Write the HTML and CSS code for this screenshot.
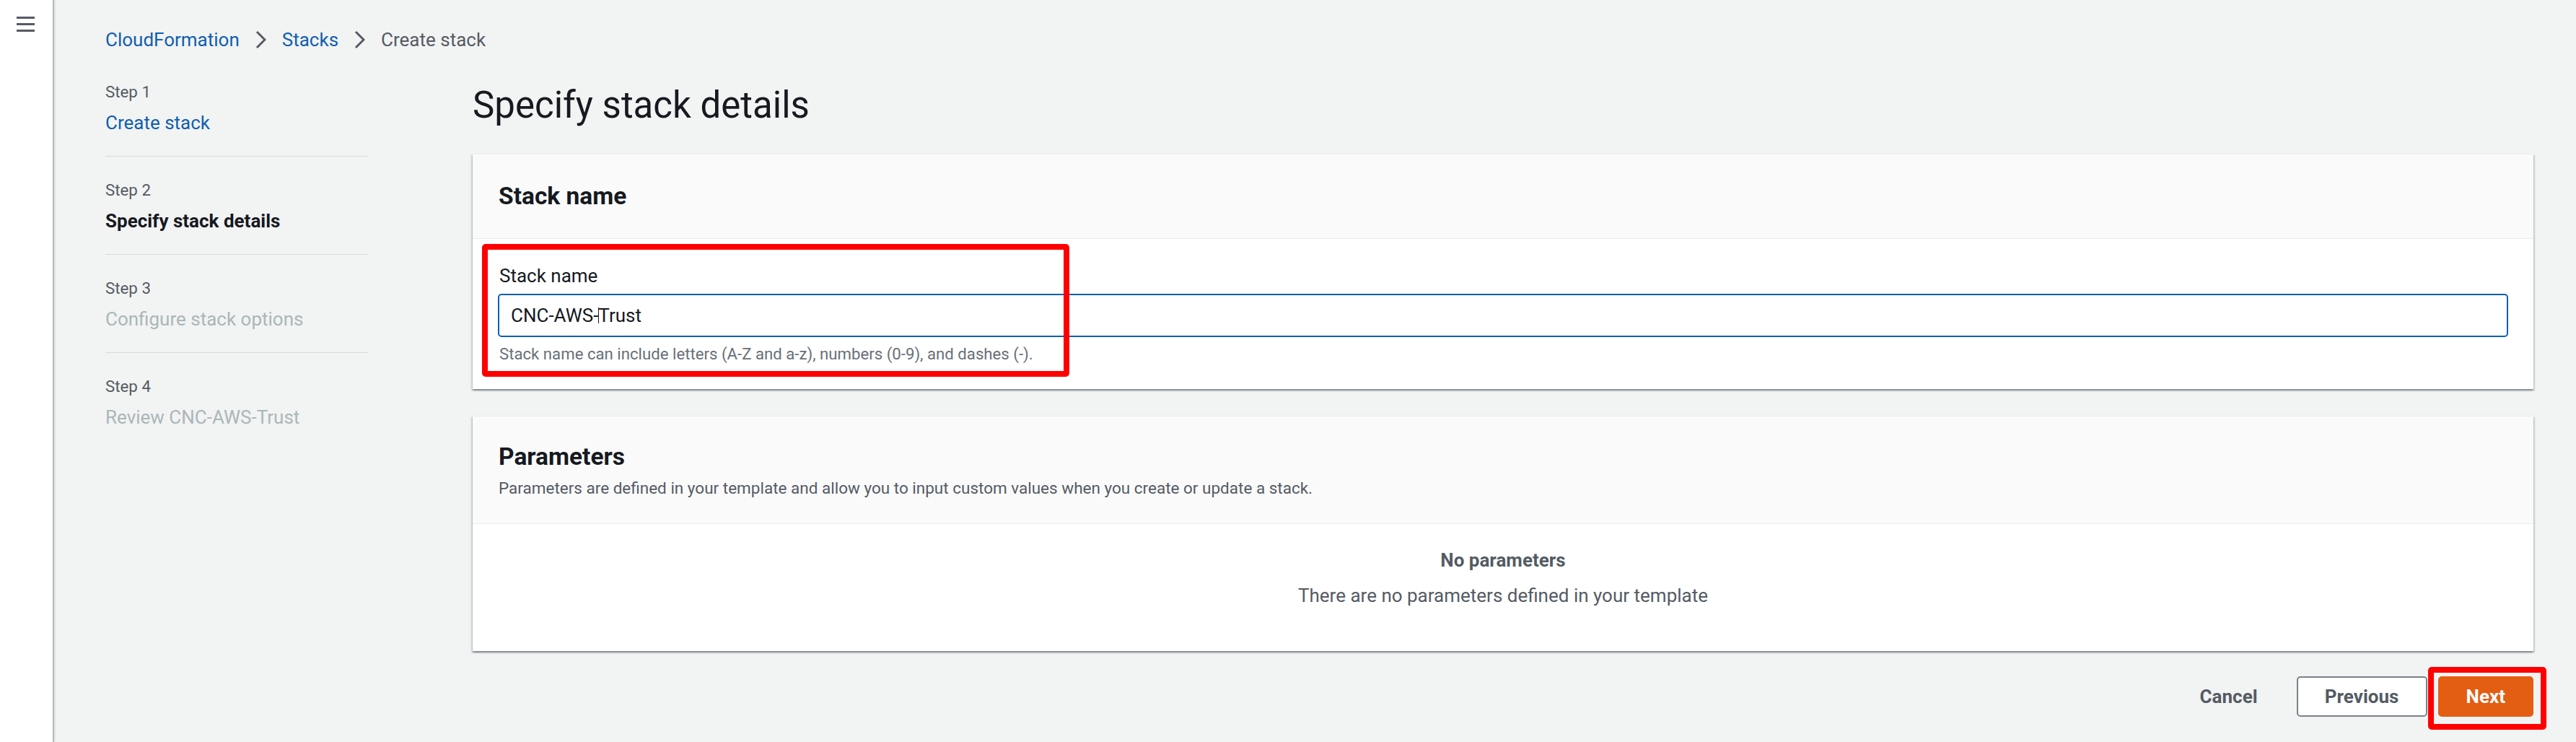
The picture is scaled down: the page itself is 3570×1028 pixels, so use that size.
FILE: index.html
```html
<!DOCTYPE html>
<html lang="en">
<head>
<meta charset="utf-8">
<title>Create stack - CloudFormation</title>
<link rel="stylesheet" href="styles.css">
</head>
<body>
<div class="app">
  <aside class="sidenav">
    <button class="menu" aria-label="Open navigation"><span></span><span></span><span></span></button>
  </aside>
  <main class="main">
    <nav class="breadcrumbs">
      <a class="crumb-link" href="#">CloudFormation</a>
      <svg class="chev" viewBox="0 0 15 26" width="15" height="26"><polyline points="2,2 13,13 2,24"/></svg>
      <a class="crumb-link" href="#">Stacks</a>
      <svg class="chev" viewBox="0 0 15 26" width="15" height="26"><polyline points="2,2 13,13 2,24"/></svg>
      <span class="crumb-current">Create stack</span>
    </nav>
    <div class="layout">
      <ol class="steps">
        <li class="step"><span class="step-num">Step 1</span><a class="step-title step-link" href="#">Create stack</a></li>
        <li class="step"><span class="step-num">Step 2</span><span class="step-title step-active">Specify stack details</span></li>
        <li class="step"><span class="step-num">Step 3</span><span class="step-title step-disabled">Configure stack options</span></li>
        <li class="step"><span class="step-num">Step 4</span><span class="step-title step-disabled">Review CNC-AWS-Trust</span></li>
      </ol>
      <div class="content">
        <h1 class="page-title">Specify stack details</h1>
        <section class="panel">
          <header class="panel-header"><h2 class="panel-title">Stack name</h2></header>
          <div class="panel-body">
            <div class="field">
              <label class="field-label">Stack name</label>
              <div class="input">CNC-AWS-<span class="caret"></span>Trust</div>
              <p class="hint">Stack name can include letters (A-Z and a-z), numbers (0-9), and dashes (-).</p>
              <div class="annot annot-field"></div>
            </div>
          </div>
        </section>
        <section class="panel panel-params">
          <header class="panel-header params-header">
            <h2 class="panel-title">Parameters</h2>
            <p class="panel-desc">Parameters are defined in your template and allow you to input custom values when you create or update a stack.</p>
          </header>
          <div class="panel-body empty">
            <p class="empty-title">No parameters</p>
            <p class="empty-text">There are no parameters defined in your template</p>
          </div>
        </section>
        <div class="actions">
          <button class="btn btn-link">Cancel</button>
          <button class="btn btn-normal">Previous</button>
          <div class="next-wrap">
            <button class="btn btn-primary">Next</button>
            <div class="annot annot-next"></div>
          </div>
        </div>
      </div>
    </div>
  </main>
</div>
</body>
</html>
```
FILE: styles.css
```css
* { box-sizing: border-box; }
html, body { margin: 0; padding: 0; }
body {
  background: #f2f3f3;
  font-family: Roboto, "Noto Sans", "Liberation Sans", sans-serif;
  font-size: 26px;
  color: #16191f;
  overflow: hidden;
}
.app {
  display: flex;
  min-height: 1028px;
}
.sidenav {
  width: 75px;
  flex: 0 0 75px;
  background: #ffffff;
  border-right: 2px solid #b4babd;
  box-shadow: 1px 0 2px rgba(0, 28, 36, 0.12);
  padding: 23px 0 0 23px;
}
.menu {
  display: flex;
  flex-direction: column;
  gap: 6px;
  width: 25px;
  padding: 0;
  border: 0;
  background: none;
}
.menu span {
  display: block;
  height: 3px;
  width: 25px;
  background: #545b64;
}
.main {
  flex: 1;
  padding: 37px 59px 0 71px;
}
.breadcrumbs {
  display: flex;
  align-items: center;
  height: 36px;
  line-height: 36px;
}
.crumb-link {
  color: #0f5fb0;
  text-decoration: none;
}
.crumb-current { color: #545b64; }
.chev {
  margin: 0 22px;
  fill: none;
  stroke: #545b64;
  stroke-width: 3;
}
.layout {
  display: grid;
  grid-template-columns: 364px 1fr;
  column-gap: 145px;
  margin-top: 39px;
}
.steps {
  list-style: none;
  margin: 0;
  padding: 0;
}
.step {
  padding: 31px 0 28px;
  border-top: 1px solid #d5dbdb;
}
.step:first-child {
  padding-top: 0;
  border-top: 0;
}
.step-num {
  display: block;
  font-size: 22.3px;
  line-height: 30px;
  color: #545b64;
}
.step-title {
  display: block;
  margin-top: 10px;
  line-height: 36px;
}
.step-link { color: #0f5fb0; text-decoration: none; }
.step-active { font-weight: 700; color: #16191f; }
.step-disabled { color: #aab7b8; }
.page-title {
  margin: 4px 0 37px;
  font-size: 51px;
  line-height: 60px;
  font-weight: 400;
  color: #16191f;
}
.panel {
  background: #ffffff;
  border-top: 1px solid #eaeded;
  box-shadow: 0 2px 2px rgba(0, 28, 36, 0.35), 2px 2px 2px rgba(0, 28, 36, 0.12), -2px 2px 2px rgba(0, 28, 36, 0.12);
}
.panel + .panel { margin-top: 37px; }
.panel-header {
  background: #fafafa;
  border-bottom: 1px solid #eaeded;
  padding: 38px 36px;
}
.panel-title {
  margin: 0;
  font-size: 33.5px;
  line-height: 40px;
  font-weight: 700;
  color: #16191f;
}
.params-header { padding: 36px 36px 34px; }
.panel-desc {
  margin: 8px 0 0;
  font-size: 22.5px;
  line-height: 30px;
  color: #545b64;
}
.panel-body { padding: 33px 35px 34px; }
.field { position: relative; }
.field-label {
  display: block;
  padding-left: 2px;
  line-height: 36px;
  color: #16191f;
}
.input {
  margin-top: 7px;
  height: 60px;
  border: 2px solid #0f5fb0;
  border-radius: 5px;
  padding-left: 16px;
  display: flex;
  align-items: center;
  color: #16191f;
}
.caret {
  display: inline-block;
  width: 1px;
  height: 22px;
  background: #16191f;
  margin: 0 -1px 0 0;
}
.hint {
  margin: 8px 0 0;
  padding-left: 2px;
  font-size: 22.2px;
  line-height: 30px;
  color: #687078;
}
.annot {
  position: absolute;
  border: 8px solid #ff0000;
  border-radius: 5px;
  pointer-events: none;
}
.annot-field {
  top: -26px;
  left: -22px;
  width: 814px;
  height: 184px;
}
.empty {
  padding: 32px 35px 59px;
  text-align: center;
  color: #545b64;
}
.empty-title {
  margin: 0;
  font-weight: 700;
  line-height: 36px;
}
.empty-text {
  margin: 13px 0 0;
  line-height: 36px;
}
.actions {
  display: flex;
  justify-content: flex-end;
  align-items: center;
  gap: 15px;
  margin-top: 35px;
}
.btn {
  height: 56px;
  padding: 0 37px;
  border-radius: 5px;
  font-family: inherit;
  font-size: 26px;
  font-weight: 700;
  line-height: 52px;
  border: 2px solid transparent;
  background: none;
  color: #545b64;
}
.btn-normal {
  background: #ffffff;
  border-color: #7b8189;
  min-width: 181px;
}
.btn-primary {
  background: #e35d13;
  border-color: #e35d13;
  color: #ffffff;
  min-width: 132px;
}
.next-wrap { position: relative; }
.annot-next {
  top: -13px;
  left: -14px;
  width: 164px;
  height: 87px;
}
```
